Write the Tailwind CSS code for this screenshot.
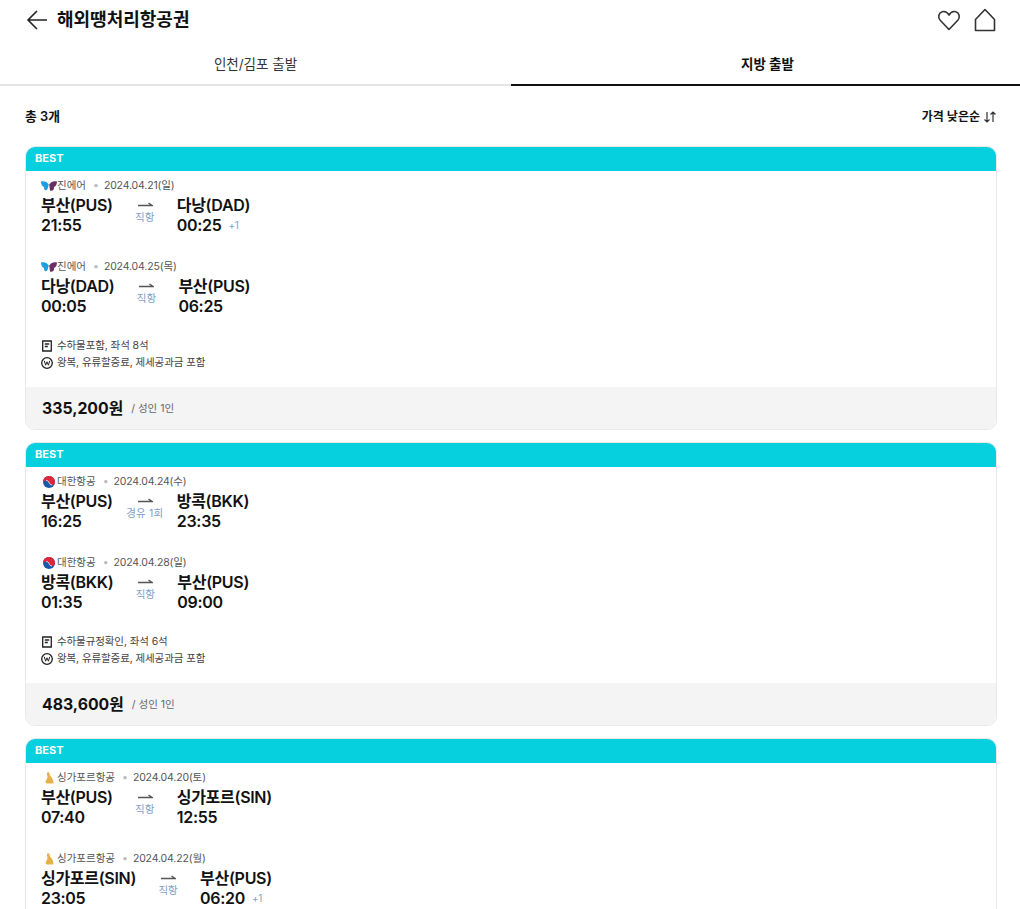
<!DOCTYPE html>
<html lang="ko">
<head>
<meta charset="utf-8">
<script src="https://cdn.jsdelivr.net/npm/@tailwindcss/browser@4"></script>
</head>
<body class="bg-white">
<div class="h-[909px] w-[1020px] overflow-hidden font-['Inter','Noto_Sans_CJK_KR',sans-serif] text-[#111]">
  <header class="flex h-[45px] items-start justify-between pl-[25px] pr-[23px]">
    <div class="flex h-[39px] items-center gap-[8px]">
      <svg class="h-[24px] w-[24px]" viewBox="0 0 24 24" fill="none" stroke="#222" stroke-width="1.600"><path d="M22 12H3M12 3l-9 9 9 9"/></svg>
      <h1 class="text-[18px] font-bold">해외땡처리항공권</h1>
    </div>
    <div class="flex h-[40px] items-center gap-[12px]">
      <svg class="h-[24px] w-[24px]" viewBox="0 0 24 24" fill="none" stroke="#333" stroke-width="1.600" stroke-linejoin="round"><path d="M12 21.500 3.200 12.200C.6 9.300 1.600 4.600 5.200 3.700c2.700-.7 5.200.6 6.800 3.300 1.600-2.700 4.100-4 6.800-3.300 3.600.9 4.600 5.600 2 8.500z"/></svg>
      <svg class="h-[24px] w-[24px]" viewBox="0 0 24 24" fill="none" stroke="#333" stroke-width="1.600" stroke-linejoin="round"><path d="M12 1.500 2.500 11.500v11h19v-11z"/></svg>
    </div>
  </header>

  <nav class="flex h-[41px] text-[13.500px]">
    <a class="flex w-[511px] items-center justify-center border-b-2 border-[#e4e4e4] pb-[1px] text-[#333]">인천/김포 출발</a>
    <a class="flex w-[509px] items-center justify-center border-b-2 border-[#111] pb-[1px] pl-[4px] font-bold">지방 출발</a>
  </nav>

  <div class="flex h-[60px] items-center justify-between pl-[25px] pr-[23px] pt-[2px] text-[12px] font-semibold">
    <span class="text-[12.800px]">총 3개</span>
    <span class="flex items-center gap-[3px]">가격 낮은순
      <svg class="h-[12px] w-[14px]" viewBox="0 0 14 12" fill="none" stroke="#333" stroke-width="1.200"><path d="M4 1v10M1.500 8.500 4 11l2.500-2.500M10 11V1M7.500 3.500 10 1l2.500 2.500"/></svg>
    </span>
  </div>

  <main class="flex flex-col gap-[12px] pl-[25px] pr-[23px]">

    <article class="overflow-hidden rounded-[10px] border border-[#e8e8e8]">
      <div class="-mx-px -mt-px flex h-[25px] items-center bg-[#07d0de] px-[10px] text-[11px] font-bold text-white">BEST</div>
      <div class="pt-[7px]">
        <section class="h-[81px] pl-[15px]">
          <div class="flex h-[16px] items-center text-[10.500px] text-[#555]">
            <svg class="h-[12px] w-[16px]" viewBox="0 0 16 12"><path d="M0 1.500C3 .5 6 1.500 7.800 4.500L6.500 9C5 11.500 2.500 10 3 7 1 6.500 0 4 0 1.500z" fill="#1c9fe0"/><path d="M16 1.500C13 .5 10 1.500 8.200 4.500L9 10.500C11.500 11.500 13.500 9.500 13 7 15 6.500 16 4 16 1.500z" fill="#6b2f66"/></svg>
            <span>진에어</span><span class="ml-[7px] mr-[5px] text-[#bbb]">•</span><span class="tracking-[-0.15px]">2024.04.21(일)</span>
          </div>
          <div class="mt-[1px] flex">
            <div class="text-[16px] leading-[20px] font-semibold tracking-[-0.3px]"><div>부산(PUS)</div><div>21:55</div></div>
            <div class="flex w-[64px] flex-col items-center text-[10.500px] leading-[14px] text-[#7f9fc8]">
              <svg class="mt-[5px] h-[8px] w-[16px]" viewBox="0 0 16 8" fill="none" stroke="#555" stroke-width="1.400"><path d="M1 5.500h14L11.500 3"/></svg>
              <span class="mt-[3px]">직항</span>
            </div>
            <div class="text-[16px] leading-[20px] font-semibold tracking-[-0.3px]"><div>다낭(DAD)</div><div class="flex items-center">00:25<span class="ml-[7px] text-[10px] font-normal text-[#7f9fc8]">+1</span></div></div>
          </div>
        </section>
        <section class="h-[79px] pl-[15px]">
          <div class="flex h-[16px] items-center text-[10.500px] text-[#555]">
            <svg class="h-[12px] w-[16px]" viewBox="0 0 16 12"><path d="M0 1.500C3 .5 6 1.500 7.800 4.500L6.500 9C5 11.500 2.500 10 3 7 1 6.500 0 4 0 1.500z" fill="#1c9fe0"/><path d="M16 1.500C13 .5 10 1.500 8.200 4.500L9 10.500C11.500 11.500 13.500 9.500 13 7 15 6.500 16 4 16 1.500z" fill="#6b2f66"/></svg>
            <span>진에어</span><span class="ml-[7px] mr-[5px] text-[#bbb]">•</span><span class="tracking-[-0.15px]">2024.04.25(목)</span>
          </div>
          <div class="mt-[1px] flex">
            <div class="text-[16px] leading-[20px] font-semibold tracking-[-0.3px]"><div>다낭(DAD)</div><div>00:05</div></div>
            <div class="flex w-[64px] flex-col items-center text-[10.500px] leading-[14px] text-[#7f9fc8]">
              <svg class="mt-[5px] h-[8px] w-[16px]" viewBox="0 0 16 8" fill="none" stroke="#555" stroke-width="1.400"><path d="M1 5.500h14L11.500 3"/></svg>
              <span class="mt-[3px]">직항</span>
            </div>
            <div class="text-[16px] leading-[20px] font-semibold tracking-[-0.3px]"><div>부산(PUS)</div><div>06:25</div></div>
          </div>
        </section>
        <div class="flex flex-col gap-[1px] pl-[15px] text-[10.500px] tracking-[-0.1px] text-[#444]">
          <div class="flex h-[16px] items-center gap-[4px]">
            <svg class="h-[12px] w-[12px]" viewBox="0 0 12 12" fill="none" stroke="#222" stroke-width="1.300"><path d="M1.700 1h8.600v10H1.700zM3.800 4h4.400M3.800 6.500h3"/></svg>수하물포함, 좌석 8석
          </div>
          <div class="flex h-[16px] items-center gap-[4px]">
            <svg class="h-[12px] w-[12px]" viewBox="0 0 12 12" fill="none" stroke="#222"><circle cx="6" cy="6" r="5.300" stroke-width="1.300"/><path d="M3.300 3.800 4.600 8.200 6 4.800l1.400 3.400 1.300-4.400" stroke-width="1"/></svg>왕복, 유류할증료, 제세공과금 포함
          </div>
        </div>
        <div class="mt-[16px] flex h-[42px] items-center gap-[8px] bg-[#f4f4f4] pl-[16px] pt-[2px]">
          <strong class="text-[15.800px] font-bold">335,200원</strong><span class="text-[10.500px] text-[#666]">/ 성인 1인</span>
        </div>
      </div>
    </article>

    <article class="overflow-hidden rounded-[10px] border border-[#e8e8e8]">
      <div class="-mx-px -mt-px flex h-[25px] items-center bg-[#07d0de] px-[10px] text-[11px] font-bold text-white">BEST</div>
      <div class="pt-[7px]">
        <section class="h-[81px] pl-[15px]">
          <div class="flex h-[16px] items-center text-[10.500px] text-[#555]">
            <span class="flex w-[16px] justify-center"><svg class="h-[12px] w-[12px]" viewBox="0 0 12 12"><circle cx="6" cy="6" r="6" fill="#1a57a8"/><path d="M.1 6.500C-.4 2.800 2.500 0 6 0c3.300 0 6 2.700 6 6 0 1.700-1.300 3-3 3S6.500 7.800 6 6.500 4.700 4.500 3.200 4.500 .9 5 .1 6.500z" fill="#e0263a"/><path d="M3.200 4.500c1.500 0 2.300.7 2.800 2S7.300 9 9 9" fill="none" stroke="#fff" stroke-width=".8"/></svg></span>
            <span>대한항공</span><span class="ml-[7px] mr-[5px] text-[#bbb]">•</span><span class="tracking-[-0.15px]">2024.04.24(수)</span>
          </div>
          <div class="mt-[1px] flex">
            <div class="text-[16px] leading-[20px] font-semibold tracking-[-0.3px]"><div>부산(PUS)</div><div>16:25</div></div>
            <div class="flex w-[64px] flex-col items-center text-[10.500px] leading-[14px] text-[#7f9fc8]">
              <svg class="mt-[5px] h-[8px] w-[16px]" viewBox="0 0 16 8" fill="none" stroke="#555" stroke-width="1.400"><path d="M1 5.500h14L11.500 3"/></svg>
              <span class="mt-[3px] tracking-[0.2px]">경유 1회</span>
            </div>
            <div class="text-[16px] leading-[20px] font-semibold tracking-[-0.3px]"><div>방콕(BKK)</div><div>23:35</div></div>
          </div>
        </section>
        <section class="h-[79px] pl-[15px]">
          <div class="flex h-[16px] items-center text-[10.500px] text-[#555]">
            <span class="flex w-[16px] justify-center"><svg class="h-[12px] w-[12px]" viewBox="0 0 12 12"><circle cx="6" cy="6" r="6" fill="#1a57a8"/><path d="M.1 6.500C-.4 2.800 2.500 0 6 0c3.300 0 6 2.700 6 6 0 1.700-1.300 3-3 3S6.500 7.800 6 6.500 4.700 4.500 3.200 4.500 .9 5 .1 6.500z" fill="#e0263a"/><path d="M3.200 4.500c1.500 0 2.300.7 2.800 2S7.300 9 9 9" fill="none" stroke="#fff" stroke-width=".8"/></svg></span>
            <span>대한항공</span><span class="ml-[7px] mr-[5px] text-[#bbb]">•</span><span class="tracking-[-0.15px]">2024.04.28(일)</span>
          </div>
          <div class="mt-[1px] flex">
            <div class="text-[16px] leading-[20px] font-semibold tracking-[-0.3px]"><div>방콕(BKK)</div><div>01:35</div></div>
            <div class="flex w-[64px] flex-col items-center text-[10.500px] leading-[14px] text-[#7f9fc8]">
              <svg class="mt-[5px] h-[8px] w-[16px]" viewBox="0 0 16 8" fill="none" stroke="#555" stroke-width="1.400"><path d="M1 5.500h14L11.500 3"/></svg>
              <span class="mt-[3px]">직항</span>
            </div>
            <div class="text-[16px] leading-[20px] font-semibold tracking-[-0.3px]"><div>부산(PUS)</div><div>09:00</div></div>
          </div>
        </section>
        <div class="flex flex-col gap-[1px] pl-[15px] text-[10.500px] tracking-[-0.1px] text-[#444]">
          <div class="flex h-[16px] items-center gap-[4px]">
            <svg class="h-[12px] w-[12px]" viewBox="0 0 12 12" fill="none" stroke="#222" stroke-width="1.300"><path d="M1.700 1h8.600v10H1.700zM3.800 4h4.400M3.800 6.500h3"/></svg>수하물규정확인, 좌석 6석
          </div>
          <div class="flex h-[16px] items-center gap-[4px]">
            <svg class="h-[12px] w-[12px]" viewBox="0 0 12 12" fill="none" stroke="#222"><circle cx="6" cy="6" r="5.300" stroke-width="1.300"/><path d="M3.300 3.800 4.600 8.200 6 4.800l1.400 3.400 1.300-4.400" stroke-width="1"/></svg>왕복, 유류할증료, 제세공과금 포함
          </div>
        </div>
        <div class="mt-[16px] flex h-[42px] items-center gap-[8px] bg-[#f4f4f4] pl-[16px] pt-[2px]">
          <strong class="text-[15.800px] font-bold">483,600원</strong><span class="text-[10.500px] text-[#666]">/ 성인 1인</span>
        </div>
      </div>
    </article>

    <article class="overflow-hidden rounded-[10px] border border-[#e8e8e8]">
      <div class="-mx-px -mt-px flex h-[25px] items-center bg-[#07d0de] px-[10px] text-[11px] font-bold text-white">BEST</div>
      <div class="pt-[7px]">
        <section class="h-[81px] pl-[15px]">
          <div class="flex h-[16px] items-center text-[10.500px] text-[#555]">
            <span class="flex w-[16px] justify-center"><svg class="h-[12px] w-[10px]" viewBox="0 0 10 12"><path d="M4 0c1.500.5 1.800 2 1.800 3.200C7.500 5 9.500 7 9.500 11.500H3.500C1.500 11.500 1 10 2 8.500 3.500 6.500 4 4.500 2.800 2.500 3 1.500 3.200.5 4 0z" fill="#e6b04a"/></svg></span>
            <span>싱가포르항공</span><span class="ml-[7px] mr-[5px] text-[#bbb]">•</span><span class="tracking-[-0.15px]">2024.04.20(토)</span>
          </div>
          <div class="mt-[1px] flex">
            <div class="text-[16px] leading-[20px] font-semibold tracking-[-0.3px]"><div>부산(PUS)</div><div>07:40</div></div>
            <div class="flex w-[64px] flex-col items-center text-[10.500px] leading-[14px] text-[#7f9fc8]">
              <svg class="mt-[5px] h-[8px] w-[16px]" viewBox="0 0 16 8" fill="none" stroke="#555" stroke-width="1.400"><path d="M1 5.500h14L11.500 3"/></svg>
              <span class="mt-[3px]">직항</span>
            </div>
            <div class="text-[16px] leading-[20px] font-semibold tracking-[-0.3px]"><div>싱가포르(SIN)</div><div>12:55</div></div>
          </div>
        </section>
        <section class="h-[79px] pl-[15px]">
          <div class="flex h-[16px] items-center text-[10.500px] text-[#555]">
            <span class="flex w-[16px] justify-center"><svg class="h-[12px] w-[10px]" viewBox="0 0 10 12"><path d="M4 0c1.500.5 1.800 2 1.800 3.200C7.500 5 9.500 7 9.500 11.500H3.500C1.500 11.500 1 10 2 8.500 3.500 6.500 4 4.500 2.800 2.500 3 1.500 3.200.5 4 0z" fill="#e6b04a"/></svg></span>
            <span>싱가포르항공</span><span class="ml-[7px] mr-[5px] text-[#bbb]">•</span><span class="tracking-[-0.15px]">2024.04.22(월)</span>
          </div>
          <div class="mt-[1px] flex">
            <div class="text-[16px] leading-[20px] font-semibold tracking-[-0.3px]"><div>싱가포르(SIN)</div><div>23:05</div></div>
            <div class="flex w-[64px] flex-col items-center text-[10.500px] leading-[14px] text-[#7f9fc8]">
              <svg class="mt-[5px] h-[8px] w-[16px]" viewBox="0 0 16 8" fill="none" stroke="#555" stroke-width="1.400"><path d="M1 5.500h14L11.500 3"/></svg>
              <span class="mt-[3px]">직항</span>
            </div>
            <div class="text-[16px] leading-[20px] font-semibold tracking-[-0.3px]"><div>부산(PUS)</div><div class="flex items-center">06:20<span class="ml-[7px] text-[10px] font-normal text-[#7f9fc8]">+1</span></div></div>
          </div>
        </section>
      </div>
    </article>
  </main>
</div>
</body>
</html>
